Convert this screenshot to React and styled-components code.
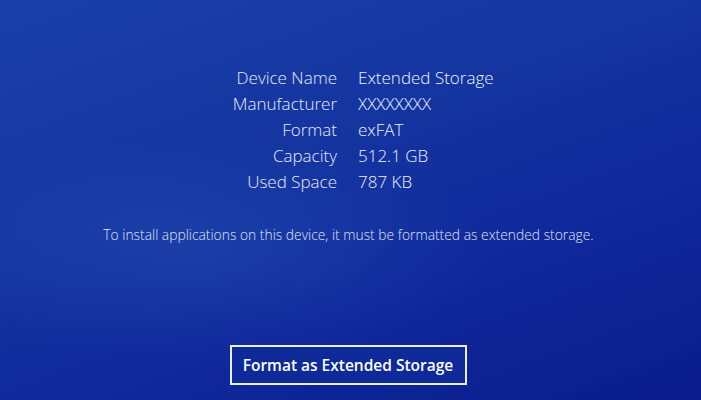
import React from 'react';
import styled, { createGlobalStyle } from 'styled-components';

const GlobalStyle = createGlobalStyle`
    html, body {
        margin: 0;
        padding: 0;
    }
    body {
        font-family: "Open Sans", "Noto Sans", sans-serif;
    }
`;

const Screen = styled.div`
    width: 701px;
    height: 400px;
    overflow: hidden;
    display: flex;
    flex-direction: column;
    align-items: center;
    color: #e4eaf8;
    background:
        radial-gradient(ellipse 420px 160px at 200px 250px, rgba(60, 110, 200, 0.22), transparent 70%),
        linear-gradient(160deg, #1b40a8 0%, #1434a0 40%, #0f279a 70%, #0a1c8a 100%);
`;

const InfoGrid = styled.div`
    width: 100%;
    box-sizing: border-box;
    padding-right: 6px;
    margin-top: 65px;
    display: grid;
    grid-template-columns: 1fr 1fr;
    column-gap: 21px;
    font-size: 17px;
    font-weight: 300;
    line-height: 26px;
`;

const Label = styled.div`
    text-align: right;
`;

const Value = styled.div`
    text-align: left;
    color: #eef2fc;
`;

const Notice = styled.p`
    margin: 31px 0 0;
    padding-right: 4px;
    font-size: 13.85px;
    font-weight: 300;
    line-height: 18px;
    color: #dfe6f7;
`;

const FormatButton = styled.button`
    margin-top: 101px;
    margin-right: 5px;
    width: 237px;
    height: 40px;
    box-sizing: border-box;
    border: 2px solid #e9eefb;
    background: #0d2a98;
    color: #ffffff;
    font-family: "Open Sans", "Noto Sans", sans-serif;
    font-size: 15.5px;
    font-weight: 600;
    padding: 0;
    cursor: pointer;
`;

const rows = [
    ['Device Name', 'Extended Storage'],
    ['Manufacturer', 'XXXXXXXX'],
    ['Format', 'exFAT'],
    ['Capacity', '512.1 GB'],
    ['Used Space', '787 KB'],
];

const App = () => {
    return (
        <Screen>
            <GlobalStyle />
            <InfoGrid>
                {rows.map(([label, value]) => (
                    <React.Fragment key={label}>
                        <Label>{label}</Label>
                        <Value>{value}</Value>
                    </React.Fragment>
                ))}
            </InfoGrid>
            <Notice>To install applications on this device, it must be formatted as extended storage.</Notice>
            <FormatButton>Format as Extended Storage</FormatButton>
        </Screen>
    );
};

export default App;
